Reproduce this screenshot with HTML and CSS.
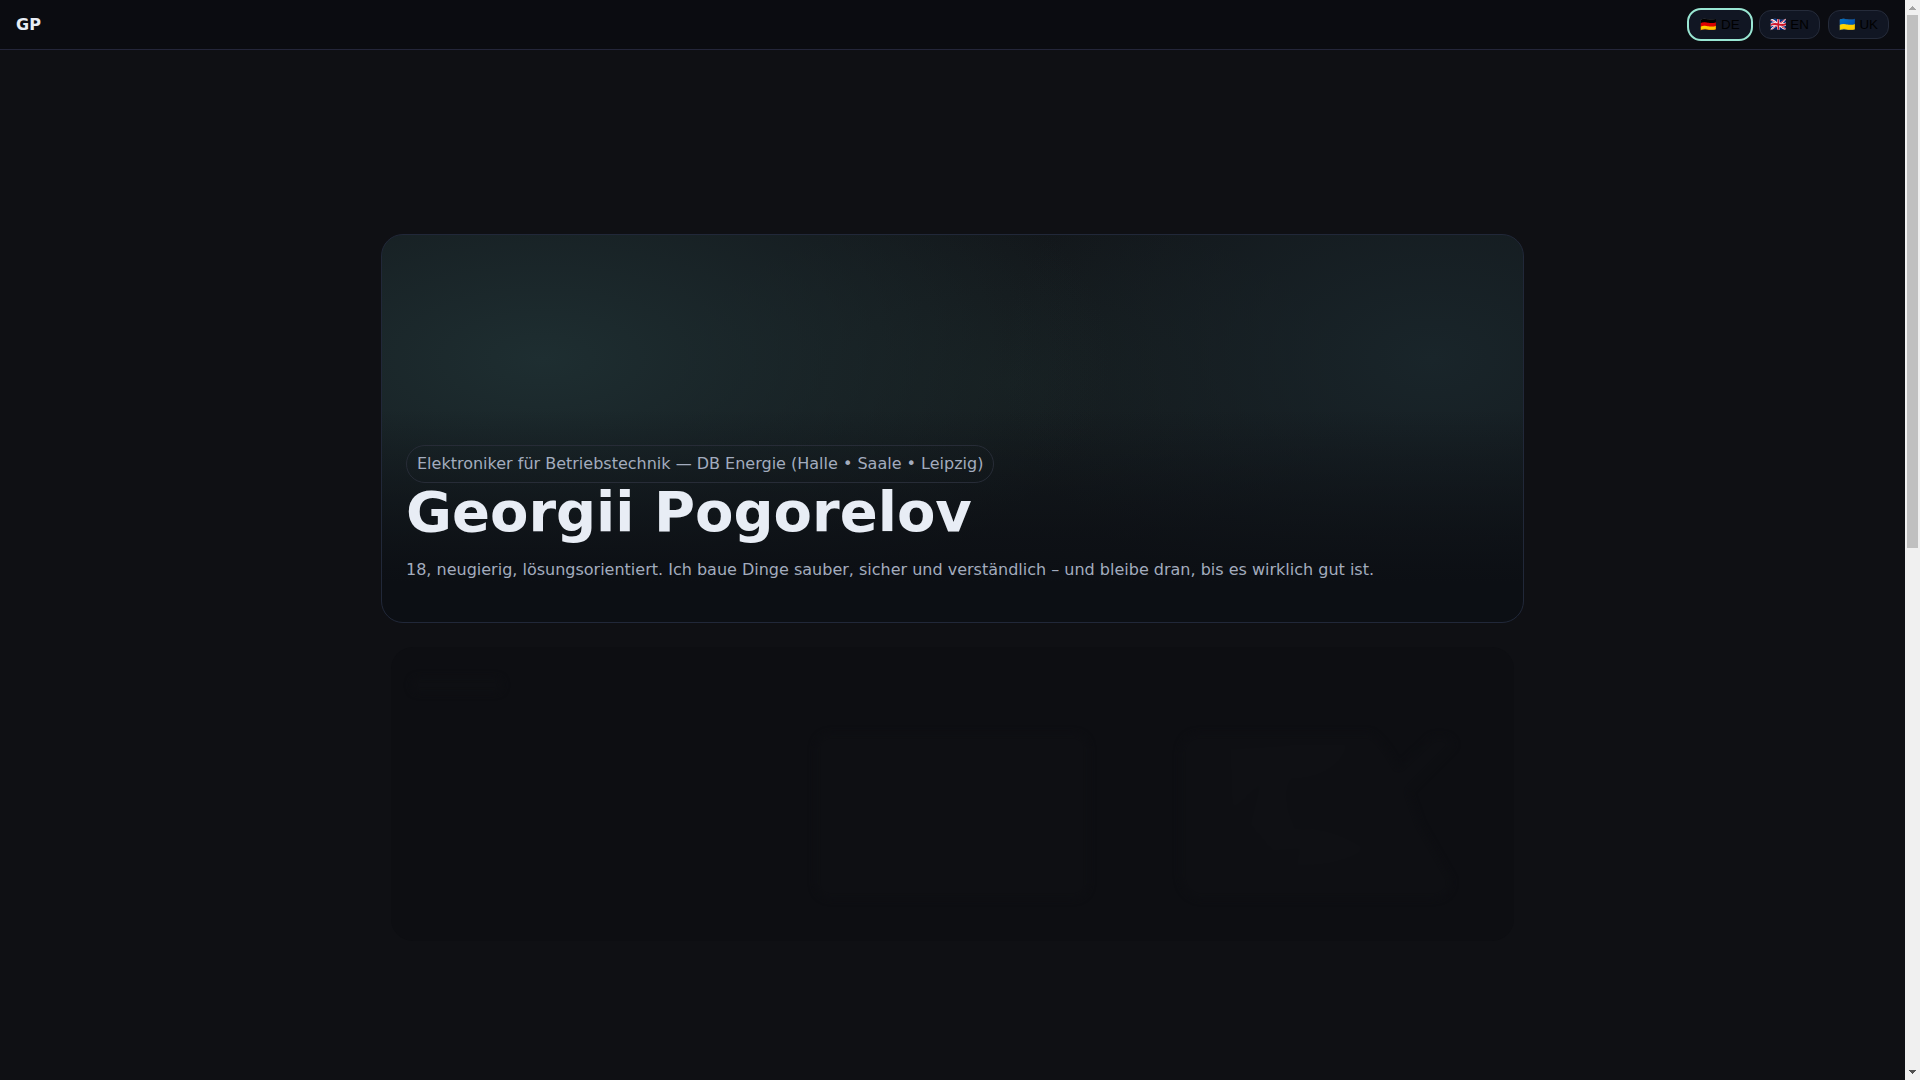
FILE: index.html
```
<!DOCTYPE html>
<html lang="de">
<head>
<meta charset="utf-8">
<meta name="viewport" content="width=device-width, initial-scale=1">
<title>Georgii Pogorelov</title>
<link rel="stylesheet" href="styles.css">
</head>
<body>
<div class="view">
  <header class="topbar">
    <strong class="brand">GP</strong>
    <nav class="langs" aria-label="Sprache">
      <button class="lang lang-active" type="button">🇩🇪 DE</button>
      <button class="lang" type="button">🇬🇧 EN</button>
      <button class="lang" type="button">🇺🇦 UK</button>
    </nav>
  </header>
  <main class="page">
    <section class="hero">
      <span class="pill">Elektroniker für Betriebstechnik — DB Energie (Halle • Saale • Leipzig)</span>
      <h1 class="name">Georgii Pogorelov</h1>
      <p class="lead">18, neugierig, lösungsorientiert. Ich baue Dinge sauber, sicher und verständlich – und bleibe dran, bis es wirklich gut ist.</p>
    </section>
    <section class="reveal" aria-hidden="true">
      <div class="reveal-title"></div>
      <div class="reveal-grid">
        <div class="tile tile-empty"></div>
        <div class="tile"></div>
        <svg class="tile-art" viewBox="0 0 274 166" preserveAspectRatio="none">
          <path class="art-base" d="M18 0H190Q205 10 218 36L252 4Q270 0 274 12L228 58L240 92L272 148Q270 166 250 166H18Q0 160 0 140V20Q2 2 18 0Z"/>
          <path class="art-light" d="M50 16L110 12L168 12Q158 44 112 46Q100 62 116 96Q150 92 186 116Q160 134 116 132L120 116L92 118L70 92L80 52L52 78Z"/>
        </svg>
      </div>
    </section>
  </main>
</div>
<div class="scrollbar" aria-hidden="true">
  <svg class="arrow" viewBox="0 0 15 15" shape-rendering="crispEdges"><path fill="#a3a3a3" d="M7 6h1v1h1v1h1v1h1v1H4V9h1V8h1V7h1z"/></svg>
  <div class="track"><div class="thumb"></div></div>
  <svg class="arrow" viewBox="0 0 15 15" shape-rendering="crispEdges"><path fill="#505050" d="M4 5h7v1h-1v1H9v1H8v1H7V8H6V7H5V6H4z"/></svg>
</div>
</body>
</html>
```
FILE: styles.css
```
* {
  box-sizing: border-box;
}

html {
  background: #0f1014;
}

body {
  display: flex;
  align-items: flex-start;
  margin: 0;
  background: #0f1014;
  color: #e8edf5;
  font: 16px/24px "DejaVu Sans", sans-serif;
}

.view {
  flex: 1;
  min-width: 0;
}

.topbar {
  display: flex;
  align-items: center;
  justify-content: space-between;
  padding: 10px 16px;
  background: #0b0c11;
  border-bottom: 1px solid #24263a;
}

.brand {
  font-weight: 700;
}

.langs {
  display: flex;
  gap: 8px;
}

.lang {
  padding: 6px 10px;
  border: 1px solid #252b3a;
  border-radius: 12px;
  background: #111623;
  color: #000;
  font-family: "Liberation Sans", Arial, sans-serif;
}

.lang-active {
  border-color: transparent;
  outline: 2px solid #99e6d3;
}

.page {
  display: flex;
  flex-direction: column;
  gap: 24px;
  width: 60%;
  margin: 0 auto;
  padding: 184px 0 96px;
}

.hero {
  display: flex;
  flex-direction: column;
  align-items: flex-start;
  justify-content: flex-end;
  min-height: 36vh;
  padding: 24px;
  border: 1px solid #212839;
  border-radius: 22px;
  background:
    linear-gradient(180deg, transparent 45%, #0c0f14 90%),
    radial-gradient(50% 70% at 14% 32%, #1e2e31, transparent),
    radial-gradient(38% 70% at 92% 32%, #19252a, transparent),
    radial-gradient(30% 45% at 55% 38%, #161e20, transparent),
    #12161a;
}

.pill {
  padding: 6px 10px;
  border: 1px solid #272c37;
  border-radius: 20px;
  color: #a3acbe;
}

.name {
  margin: 0 0 1px;
  font-size: 56px;
  line-height: 58px;
}

.lead {
  margin: 16px 0;
  color: #a3acbe;
}

.reveal {
  margin: 0 10px;
  padding: 30px 60px 42px 20px;
  border-radius: 22px;
  background: #0d0e12;
}

.reveal-title {
  width: 92px;
  height: 16px;
  border-radius: 8px;
  background: #0e0f13;
  filter: blur(3px);
}

.reveal-grid {
  display: grid;
  grid-template-columns: 312px 274px 274px;
  justify-content: space-between;
  margin-top: 40px;
}

.tile {
  height: 166px;
  border-radius: 16px;
  background: #0e0f13;
  filter: blur(3px);
}

.tile-empty {
  background: none;
}

.tile-art {
  width: 100%;
  height: 166px;
  filter: blur(3px);
}

.art-base {
  fill: #0e0f13;
}

.art-light {
  fill: #0f1014;
}

.scrollbar {
  position: sticky;
  top: 0;
  display: flex;
  flex-direction: column;
  width: 15px;
  height: 100vh;
  background: #f0f0f0;
}

.arrow {
  display: block;
  width: 15px;
  height: 15px;
}

.track {
  flex: 1;
  padding: 0 2px;
}

.thumb {
  height: 50.8%;
  background: #c0c0c0;
}
```
